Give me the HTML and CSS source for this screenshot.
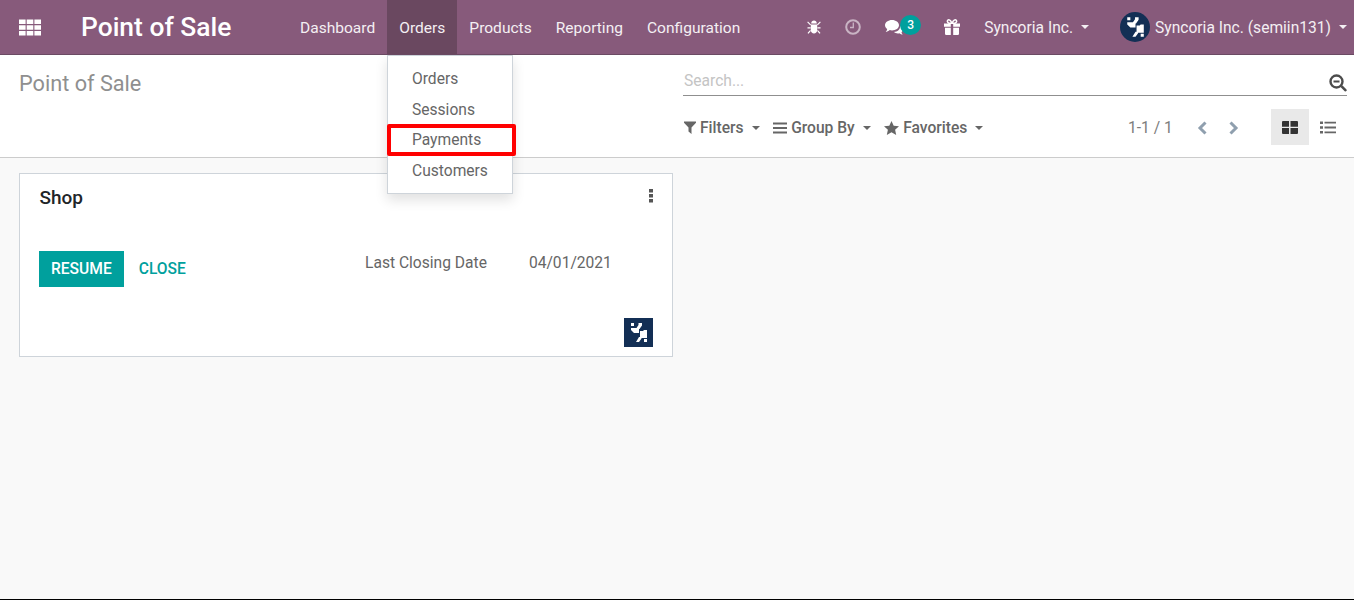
FILE: index.html
```html
<!DOCTYPE html>
<html lang="en">
<head>
  <meta charset="UTF-8">
  <title>Point of Sale</title>
  <link rel="stylesheet" href="styles.css">
</head>
<body>
  <svg class="defs" width="0" height="0">
    <symbol id="logo" viewBox="0 0 29 29">
      <path fill="#fff" d="M7 5h3v3H7zM14.500 5H18v2.500L15.500 11H15v4H10l-3-3v-2h5.500l2-3zM16 13h3l1-1h3v8h-6l-1-1zM15 19h2.500v1.500L15 24h-3zM20 21h3v3h-3z"/>
    </symbol>
  </svg>

  <header class="navbar">
    <a class="apps">
      <svg width="22" height="17" viewBox="0 0 22 17"><path fill="#fff" d="M0 .5h6.600v4.600H0zM7.700 .5h6.600v4.600H7.700zM15.400 .5H22v4.600h-6.600zM0 6.200h6.600v4.600H0zM7.700 6.200h6.600v4.600H7.700zM15.400 6.200H22v4.600h-6.600zM0 11.900h6.600v4.600H0zM7.700 11.900h6.600v4.600H7.700zM15.400 11.900H22v4.600h-6.600z"/></svg>
    </a>
    <span class="brand">Point of Sale</span>
    <nav class="menu">
      <a class="menu-item">Dashboard</a>
      <a class="menu-item active">Orders</a>
      <a class="menu-item">Products</a>
      <a class="menu-item">Reporting</a>
      <a class="menu-item">Configuration</a>
    </nav>
    <div class="systray">
      <svg class="tray-bug" width="14" height="14" viewBox="0 0 14 14"><path fill="#fff" d="M4.200 3.500C4.200 1.500 5.500.5 7 .5s2.800 1 2.800 3zM3.800 4.500h6.400V10c0 2-1.500 3.500-3.200 3.500S3.800 12 3.800 10zM1 1.500l3 3-.8.8-3-3zM13 1.500l-3 3 .8.8 3-3zM.5 7.200h3v1.200h-3zM10.500 7.200h3v1.200h-3zM3.200 10l.6 1-2.300 2.800-1-.8zM10.800 10l-.6 1 2.300 2.800 1-.8z"/></svg>
      <svg class="tray-clock" width="16" height="16" viewBox="0 0 16 16"><circle cx="8" cy="8" r="6.800" fill="none" stroke="#c9b4c4" stroke-width="2"/><path fill="none" stroke="#c9b4c4" stroke-width="1.300" d="M8.300 3.500v5H5"/></svg>
      <span class="tray-chat">
        <svg width="18" height="15" viewBox="0 0 18 15"><path fill="#fff" d="M7 0c3.900 0 7 2.300 7 5.200s-3.100 5.200-7 5.200c-.8 0-1.500-.1-2.200-.3C3.500 11.200 2 12 .7 12c.9-.9 1.400-1.900 1.500-3C.8 8 0 6.700 0 5.200 0 2.300 3.100 0 7 0z"/><path fill="#fff" d="M15 5.500c1.800.8 3 2.200 3 3.800 0 1.100-.6 2.200-1.500 3 .1.800.5 1.600 1.200 2.300-1.100 0-2.300-.5-3.300-1.400-.5.100-1 .2-1.500.2-1.600 0-3-.5-4-1.400 3.500-.1 6.500-2.700 6.600-6.500z"/></svg>
        <span class="badge">3</span>
      </span>
      <svg class="tray-gift" width="16" height="16" viewBox="0 0 16 16"><path fill="#fff" d="M0 4.500h6.800v3.300H0zM9.200 4.500H16v3.300H9.200zM1 8.800h5.800V16H2.200A1.200 1.200 0 0 1 1 14.800zM9.200 8.800H15v6A1.200 1.200 0 0 1 13.800 16H9.200z"/><path fill="none" stroke="#fff" stroke-width="1.500" d="M8 4.200C6.500 1 4.800.5 3.900 1.100 3 1.800 3.300 3.800 5 4.200zM8 4.200C9.500 1 11.200.5 12.100 1.100c.9.700.6 2.700-1.100 3.100z"/></svg>
      <a class="company"><span class="nudge">Syncoria Inc.</span><i class="caret"></i></a>
      <a class="user">
        <svg class="avatar" width="30" height="30"><use href="#logo"/></svg>
        <span class="nudge">Syncoria Inc. (semiin131)</span><i class="caret"></i>
      </a>
    </div>
  </header>

  <section class="control-panel">
    <div class="cp-left">
      <h2 class="crumb">Point of Sale</h2>
    </div>
    <div class="cp-right">
      <div class="search">
        <span class="search-text">Search...</span>
        <svg width="18" height="18" viewBox="0 0 18 18"><circle cx="7.500" cy="7.500" r="6" fill="none" stroke="#4c4c4c" stroke-width="2.400"/><path fill="#4c4c4c" d="M4.500 6.500h6v2h-6zM11.500 13l1.800-1.800 4.200 4.200a1.300 1.300 0 0 1-1.800 1.800z"/></svg>
      </div>
      <div class="cp-tools">
        <div class="filters">
          <a class="filter">
            <svg width="12" height="13" viewBox="0 0 12 13"><path fill="#666" d="M0 .5h12v1.300L7.500 6.500V13l-3-2.500V6.500L0 1.800z"/></svg>
            Filters<i class="caret dark"></i>
          </a>
          <a class="filter">
            <svg width="14" height="12" viewBox="0 0 14 12"><path fill="#666" d="M0 .5h14v2H0zM0 5h14v2H0zM0 9.500h14v2H0z"/></svg>
            Group By<i class="caret dark"></i>
          </a>
          <a class="filter">
            <svg width="15" height="14" viewBox="0 0 15 14"><path fill="#666" d="M7.500 0l2.200 4.700 5.300.6-3.900 3.500 1.100 5.200-4.700-2.700L2.800 14l1.100-5.200L0 5.300l5.300-.6z"/></svg>
            Favorites<i class="caret dark"></i>
          </a>
        </div>
        <div class="pager">
          <span class="pager-count">1-1 / 1</span>
          <svg width="12" height="14" viewBox="0 0 12 14"><path fill="none" stroke="#8f9fae" stroke-width="3" d="M9.500 1.500L4 7l5.500 5.500"/></svg>
          <svg class="pager-next" width="12" height="14" viewBox="0 0 12 14"><path fill="none" stroke="#8f9fae" stroke-width="3" d="M2.500 1.500L8 7l-5.500 5.500"/></svg>
        </div>
        <div class="views">
          <a class="view selected">
            <svg width="16" height="13" viewBox="0 0 16 13"><path fill="#333" d="M0 1a1 1 0 0 1 1-1h6v5.800H0zM8.500 0H15a1 1 0 0 1 1 1v4.800H8.500zM0 7h7v6H1a1 1 0 0 1-1-1zM8.500 7H16v5a1 1 0 0 1-1 1H8.500z"/></svg>
          </a>
          <a class="view">
            <svg width="16" height="13" viewBox="0 0 16 13"><path fill="#666" d="M0 .5h3v2.400H0zM0 5.300h3v2.400H0zM0 10.100h3v2.400H0zM4.500 .8H16v1.800H4.500zM4.500 5.600H16v1.800H4.500zM4.500 10.400H16v1.800H4.500z"/></svg>
          </a>
        </div>
      </div>
    </div>
  </section>

  <main class="content">
    <article class="card">
      <div class="card-top">
        <h3 class="card-title">Shop</h3>
        <svg width="4" height="14" viewBox="0 0 4 14"><path fill="#555" d="M0 0h4v3.500H0zM0 5h4v3.500H0zM0 10h4v3.500H0z"/></svg>
      </div>
      <div class="card-body">
        <div class="card-actions">
          <a class="btn-primary">RESUME</a>
          <a class="btn-link">CLOSE</a>
        </div>
        <div class="card-info">
          <span>Last Closing Date</span>
          <span>04/01/2021</span>
        </div>
      </div>
      <div class="card-foot">
        <svg class="card-logo" width="29" height="29"><use href="#logo"/></svg>
      </div>
    </article>
  </main>

  <ul class="dropdown">
    <li>Orders</li>
    <li>Sessions</li>
    <li>Payments</li>
    <li>Customers</li>
  </ul>
  <div class="highlight"></div>
  <div class="bottom-line"></div>
</body>
</html>
```

FILE: styles.css
```css
* { box-sizing: border-box; }
html, body { height: 100%; }
body { margin: 0; height: 600px; overflow: hidden; background: #f9f9f9; font-family: Roboto, "Noto Sans", sans-serif; font-size: 15.600px; color: #666; position: relative; }
a { cursor: pointer; }
.defs { position: absolute; }

.navbar { height: 55px; display: flex; align-items: center; background: #875a7b; border-bottom: 1px solid #6b4a63; color: #fff; }
.apps { display: flex; margin-left: 19px; width: 22px; }
.brand { margin-left: 40px; width: 207px; font-size: 26.400px; font-weight: 500; white-space: nowrap; }
.menu { display: flex; align-self: stretch; }
.menu-item { display: flex; align-items: center; padding: 1px 12px 0; font-size: 15.550px; color: #f4eff3; }
.menu-item.active { background: #6a4860; }
.systray { display: flex; align-items: center; margin-left: auto; align-self: stretch; }
.tray-bug { margin-right: 24px; }
.tray-clock { margin-right: 24px; }
.tray-chat { display: flex; align-items: center; position: relative; width: 59px; }
.badge { position: absolute; left: 15px; top: -5px; width: 21px; height: 20px; border-radius: 50%; background: #00a09d; color: #fff; font-size: 12px; font-weight: 500; line-height: 20px; text-align: center; }
.tray-gift { margin-right: 24px; }
.company { display: flex; align-items: center; color: #f4eff3; white-space: nowrap; }
.user { display: flex; align-items: center; margin-left: 31px; margin-right: 7px; color: #f4eff3; white-space: nowrap; }
.nudge { padding-top: 1px; }
.avatar { border-radius: 50%; background: #132f55; margin-right: 5px; }
.caret { display: inline-block; width: 0; height: 0; margin-left: 8px; border-top: 4px solid currentColor; border-left: 4px solid transparent; border-right: 4px solid transparent; }
.caret.dark { color: #666; margin-left: 4px; }

.control-panel { height: 103px; display: grid; grid-template-columns: 683px 1fr; background: #fff; border-bottom: 1px solid #ccc; }
.crumb { margin: 0; padding: 14px 0 0 19px; font-size: 21.700px; font-weight: 400; line-height: 30px; color: #8f8f8f; }
.search { display: flex; justify-content: space-between; align-items: center; height: 30px; margin: 11px 7px 0 0; padding-left: 1px; border-bottom: 1px solid #8f8f8f; }
.search svg { margin-top: 5px; }
.search-text { color: #c4c4c4; }
.cp-tools { display: flex; align-items: center; margin-top: 13px; height: 36px; }
.filters { display: flex; gap: 13.500px; width: 445px; padding: 1px 0 0 1px; }
.filter { display: flex; align-items: center; gap: 4px; font-weight: 500; font-size: 15.600px; color: #666; }
.filter svg { flex: none; }
.pager { display: flex; align-items: center; width: 143px; padding-top: 1px; }
.pager-count { width: 68px; color: #7c7c7c; }
.pager-next { margin-left: 20px; }
.views { display: flex; }
.view { display: flex; align-items: center; justify-content: center; width: 38px; height: 36px; }
.view.selected { background: #e9e9e9; }

.content { padding: 15px 0 0 19px; }
.card { width: 654px; height: 184px; display: flex; flex-direction: column; background: #fff; border: 1px solid #ced4da; }
.card-top { display: flex; justify-content: space-between; padding: 14px 19px 0 19.500px; height: 77px; }
.card-top svg { margin-top: 1px; }
.card-title { margin: 0; font-size: 19px; font-weight: 500; line-height: 19px; color: #212529; }
.card-body { display: flex; justify-content: space-between; height: 36px; padding-left: 19px; }
.card-actions { display: flex; align-items: center; }
.btn-primary { display: flex; align-items: center; height: 36px; padding: 0 12px; background: #00a09d; color: #fff; font-weight: 500; }
.btn-link { margin-left: 15px; color: #00a09d; font-weight: 500; }
.card-info { display: flex; gap: 42px; width: 307px; color: #666; line-height: 24px; }
.card-foot { display: flex; justify-content: flex-end; padding: 31px 19px 0 0; }
.card-logo { background: #132f55; }

.dropdown { position: absolute; left: 387px; top: 55px; width: 126px; height: 139px; margin: 0; padding: 8px 0; list-style: none; background: #fff; border: 1px solid #ced4da; box-shadow: 0 6px 12px rgba(0, 0, 0, 0.12); }
.dropdown li { height: 30.700px; padding-left: 24px; line-height: 30px; color: #666; }
.highlight { position: absolute; left: 387px; top: 124px; width: 129px; height: 32px; border: 4px solid #f00; border-radius: 2px; }
.bottom-line { position: absolute; left: 0; right: 0; bottom: 0; height: 1px; background: #000; }
```
